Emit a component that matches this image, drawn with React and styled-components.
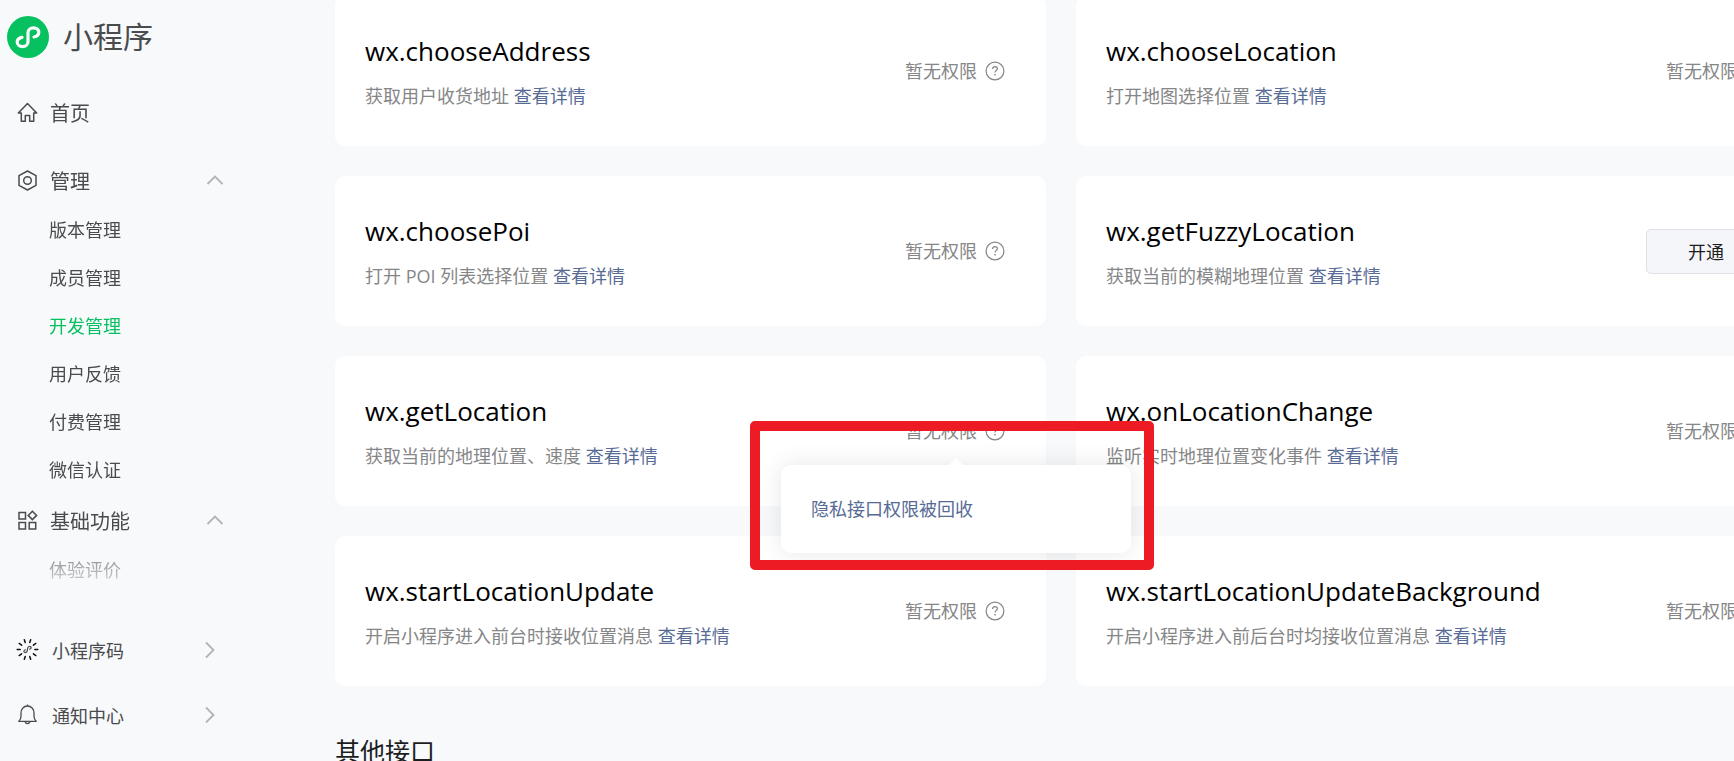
import React from 'react'
import styled, { createGlobalStyle, css, ThemeProvider } from 'styled-components'

const theme = {
  bg: '#f7f9fb',
  white: '#ffffff',
  black: '#000000',
  dark: '#1c1d1f',
  text: '#4a4b4d',
  gray: '#858687',
  grayLight: '#b2b3b5',
  green: '#07c160',
  link: '#576b95',
  red: '#ed1c24',
}

const GlobalStyle = createGlobalStyle`
  * {
    box-sizing: border-box;
  }
  body {
    margin: 0;
    overflow: hidden;
    background: ${theme.bg};
    font-family: 'Open Sans', 'Noto Sans CJK SC', sans-serif;
    font-weight: 400;
    color: ${theme.text};
  }
  a {
    text-decoration: none;
  }
`

const Page = styled.div`
  display: flex;
  align-items: flex-start;
  height: 100vh;
  overflow: hidden;
`

const Sidebar = styled.aside`
  display: flex;
  flex-direction: column;
  flex: 0 0 335px;
  height: 100%;
`
const Brand = styled.a`
  display: flex;
  align-items: center;
  gap: 14px;
  padding: 15px 7px 14px;
  font-size: 30px;
  line-height: 44px;
  color: ${props => props.theme.text};
`
const Scroller = styled.nav`
  flex: 1 1 0;
  min-height: 0;
  overflow: hidden;
  padding-top: 9px;
  mask-image: linear-gradient(to bottom, #000 calc(100% - 50px), rgba(0, 0, 0, 0.25));
`
const Footer = styled.nav`
  padding: 36px 0 14px;
`
const MenuItem = styled.a`
  display: flex;
  align-items: center;
  width: 234px;
  height: ${props => (props.$small ? '65px' : '60px')};
  padding: 0 10px 0 17px;
  font-size: ${props => (props.$small ? '18px' : '20px')};
  color: ${props => props.theme.text};
`
const Group = styled.section`
  padding-top: ${props => (props.$spaced ? '12px' : '0')};
`
const GroupToggle = styled.button`
  display: flex;
  align-items: center;
  width: 234px;
  height: 52px;
  padding: 0 10px 0 17px;
  border: none;
  background: none;
  font: inherit;
  font-size: 20px;
  color: ${props => props.theme.text};
`
const ItemLabel = styled.span`
  flex: 1;
  padding-left: ${props => (props.$wide ? '14px' : '12px')};
  text-align: left;
`
const SubItem = styled.a`
  display: block;
  padding-left: 49px;
  font-size: 18px;
  line-height: 48px;
  color: ${props => (props.$active ? props.theme.green : props.theme.text)};
`
const ArrowBox = styled.span`
  display: flex;
  margin-right: ${props => (props.$right ? '8px' : '0')};
`

const Main = styled.main`
  flex: 1 0 auto;
  margin-top: -4px;
`
const Grid = styled.div`
  display: grid;
  grid-template-columns: minmax(711px, 711fr) minmax(731px, 731fr);
  gap: 30px;
`
const Card = styled.article`
  display: flex;
  align-items: center;
  justify-content: space-between;
  height: 150px;
  padding: 0 41px 0 30px;
  border-radius: 10px;
  background: ${props => props.theme.white};
`
const CardTitle = styled.h3`
  margin: 0;
  padding-top: 1px;
  font-size: 26px;
  line-height: 40px;
  font-weight: 400;
  color: ${props => props.theme.black};
`
const CardDesc = styled.p`
  margin: 9px 0 0;
  font-size: 18px;
  line-height: 32px;
  color: ${props => props.theme.gray};
`
const Link = styled.a`
  color: ${props => props.theme.link};
`
const Status = styled.div`
  position: relative;
  display: flex;
  align-items: center;
  gap: 8px;
  font-size: 18px;
  line-height: 28px;
  color: ${props => props.theme.gray};
`
const HelpButton = styled.button`
  display: flex;
  padding: 0;
  border: none;
  background: none;
  color: inherit;
`
const OpenButton = styled.button`
  width: 120px;
  height: 45px;
  border: 1px solid #dfe1e5;
  border-radius: 5px;
  background: #f5f6f9;
  font: inherit;
  font-size: 18px;
  color: ${props => props.theme.dark};
`
const Popover = styled.div`
  position: absolute;
  z-index: 2;
  top: 48px;
  left: 50%;
  width: 350px;
  margin-left: -174px;
  padding: 30px;
  border-radius: 10px;
  background: ${props => props.theme.white};
  box-shadow: 0 0 24px rgba(0, 0, 0, 0.1);

  &::before {
    content: '';
    position: absolute;
    top: -7px;
    left: 50%;
    margin-left: -7px;
    border: 7px solid transparent;
    border-top: none;
    border-bottom-color: ${props => props.theme.white};
  }
`
const Highlight = styled.div`
  position: absolute;
  inset: -44px -23px -17px -31px;
  border: 10px solid ${props => props.theme.red};
  border-radius: 5px;
  pointer-events: none;
`
const SectionTitle = styled.h2`
  margin: 45px 0 0;
  font-size: 25px;
  line-height: 40px;
  font-weight: 400;
  color: ${props => props.theme.dark};
`

const Stroke = styled.svg.attrs({ fill: 'none', stroke: 'currentColor' })`
  display: block;
  flex: none;
  ${props =>
    props.$light &&
    css`
      color: ${props.theme.grayLight};
    `}
`

const Logo = () => (
  <svg width="42" height="42" viewBox="0 0 42 42">
    <circle cx="21" cy="21" r="21" fill="#07c160" />
    <path
      d="M27 21c3-.6 4.800-2.300 4.800-4.700 0-2.600-2.400-4.500-5.300-4.500s-5.500 2-5.500 4.800v9.200c0 2.800-2.600 4.800-5.500 4.800s-5.300-1.900-5.300-4.500c0-2.400 1.800-4.100 4.800-4.700"
      fill="none"
      stroke="#fff"
      strokeWidth="3.200"
      strokeLinecap="round"
    />
  </svg>
)

const HomeIcon = () => (
  <Stroke width="21" height="21" viewBox="0 0 21 21" strokeWidth="1.500" strokeLinejoin="round">
    <path d="M10.500 1.500 1.300 11h3v8.200h4v-5.700h4.400v5.700h4V11h3z" />
  </Stroke>
)

const ManageIcon = () => (
  <Stroke width="21" height="21" viewBox="0 0 21 21" strokeWidth="1.500" strokeLinejoin="round">
    <path d="M10.500 1 19 5.700v9.600L10.500 20 2 15.300V5.700z" />
    <circle cx="10.500" cy="10.500" r="3.800" />
  </Stroke>
)

const FeatureIcon = () => (
  <Stroke width="21" height="21" viewBox="0 0 21 21" strokeWidth="1.500">
    <path d="M2 2.500h6.500V9H2zM2 12.500h6.500V19H2zM12.200 12.500h6.500V19h-6.500zM15.400 1.200 19.600 5.400 15.400 9.600 11.200 5.400z" />
  </Stroke>
)

const rays = [0, 36, 72, 108, 144, 180, 216, 252, 288, 324]

const CodeIcon = () => (
  <Stroke width="21" height="21" viewBox="0 0 21 21" strokeLinecap="round" overflow="visible">
    <g stroke="#111" strokeWidth="1.500">
      {rays.map(deg => (
        <path key={deg} d="M17.800 10.500h3" transform={`rotate(${deg} 10.500 10.500)`} />
      ))}
    </g>
    <path
      strokeWidth="1.200"
      d="M12.600 10.200c1-.2 1.600-.8 1.500-1.600-.1-.9-1-1.300-1.900-1.100-1 .2-1.500.9-1.600 1.800l-.4 2.600c-.1.900-.7 1.600-1.600 1.700-.9.100-1.700-.4-1.700-1.200 0-.8.6-1.400 1.500-1.600"
    />
  </Stroke>
)

const BellIcon = () => (
  <Stroke width="21" height="21" viewBox="0 0 21 21" strokeWidth="1.300" strokeLinejoin="round">
    <path d="M1.800 17.300h17.400c-1.500-1.400-2.200-2.600-2.200-5V9c0-4-2.700-7-6.500-7S4 5 4 9v3.300c0 2.400-.7 3.600-2.200 5zM10.500 2V.4M8.300 17.500c0 2.800 4.400 2.800 4.400 0" />
  </Stroke>
)

const HelpIcon = () => (
  <Stroke width="20" height="20" viewBox="0 0 20 20" strokeWidth="1.200">
    <circle cx="10" cy="10" r="8.900" />
    <path d="M7.600 8c0-1.400 1-2.300 2.400-2.300s2.400.9 2.400 2.100c0 1.700-2.400 1.800-2.400 3.700" />
    <path d="M10 12.900v1.500" strokeWidth="1.400" />
  </Stroke>
)

const Arrow = ({ right }) => (
  <ArrowBox $right={right}>
    {right ? (
      <Stroke $light width="12" height="18" viewBox="0 0 12 18" strokeWidth="1.800">
        <path d="M2 1.500 9.500 9 2 16.500" />
      </Stroke>
    ) : (
      <Stroke $light width="18" height="12" viewBox="0 0 18 12" strokeWidth="1.800">
        <path d="M1.500 10 9 2.500l7.500 7.500" />
      </Stroke>
    )}
  </ArrowBox>
)

const manageItems = ['版本管理', '成员管理', '开发管理', '用户反馈', '付费管理', '微信认证']

const apis = [
  { name: 'wx.chooseAddress', desc: '获取用户收货地址' },
  { name: 'wx.chooseLocation', desc: '打开地图选择位置' },
  { name: 'wx.choosePoi', desc: '打开 POI 列表选择位置' },
  { name: 'wx.getFuzzyLocation', desc: '获取当前的模糊地理位置', available: true },
  { name: 'wx.getLocation', desc: '获取当前的地理位置、速度', notice: '隐私接口权限被回收' },
  { name: 'wx.onLocationChange', desc: '监听实时地理位置变化事件' },
  { name: 'wx.startLocationUpdate', desc: '开启小程序进入前台时接收位置消息' },
  { name: 'wx.startLocationUpdateBackground', desc: '开启小程序进入前后台时均接收位置消息' },
]

const ApiCard = ({ name, desc, available, notice }) => (
  <Card>
    <div>
      <CardTitle>{name}</CardTitle>
      <CardDesc>
        {desc} <Link href="#detail">查看详情</Link>
      </CardDesc>
    </div>
    {available ? (
      <OpenButton type="button">开通</OpenButton>
    ) : (
      <Status>
        暂无权限
        <HelpButton type="button" aria-label="说明">
          <HelpIcon />
        </HelpButton>
        {notice && (
          <Popover role="tooltip">
            <Link href="#notice">{notice}</Link>
            <Highlight />
          </Popover>
        )}
      </Status>
    )}
  </Card>
)

const App = () => (
  <ThemeProvider theme={theme}>
    <GlobalStyle />
    <Page>
      <Sidebar>
        <Brand href="#home">
          <Logo />
          小程序
        </Brand>
        <Scroller>
          <MenuItem href="#home">
            <HomeIcon />
            <ItemLabel>首页</ItemLabel>
          </MenuItem>
          <Group $spaced>
            <GroupToggle type="button" aria-expanded="true">
              <ManageIcon />
              <ItemLabel>管理</ItemLabel>
              <Arrow />
            </GroupToggle>
            {manageItems.map(item => (
              <SubItem key={item} href="#manage" $active={item === '开发管理'}>
                {item}
              </SubItem>
            ))}
          </Group>
          <Group>
            <GroupToggle type="button" aria-expanded="true">
              <FeatureIcon />
              <ItemLabel>基础功能</ItemLabel>
              <Arrow />
            </GroupToggle>
            <SubItem href="#rating">体验评价</SubItem>
          </Group>
        </Scroller>
        <Footer>
          <MenuItem href="#code" $small>
            <CodeIcon />
            <ItemLabel $wide>小程序码</ItemLabel>
            <Arrow right />
          </MenuItem>
          <MenuItem href="#notice-center" $small>
            <BellIcon />
            <ItemLabel $wide>通知中心</ItemLabel>
            <Arrow right />
          </MenuItem>
        </Footer>
      </Sidebar>
      <Main>
        <Grid>
          {apis.map(api => (
            <ApiCard key={api.name} {...api} />
          ))}
        </Grid>
        <SectionTitle>其他接口</SectionTitle>
      </Main>
    </Page>
  </ThemeProvider>
)

export default App
